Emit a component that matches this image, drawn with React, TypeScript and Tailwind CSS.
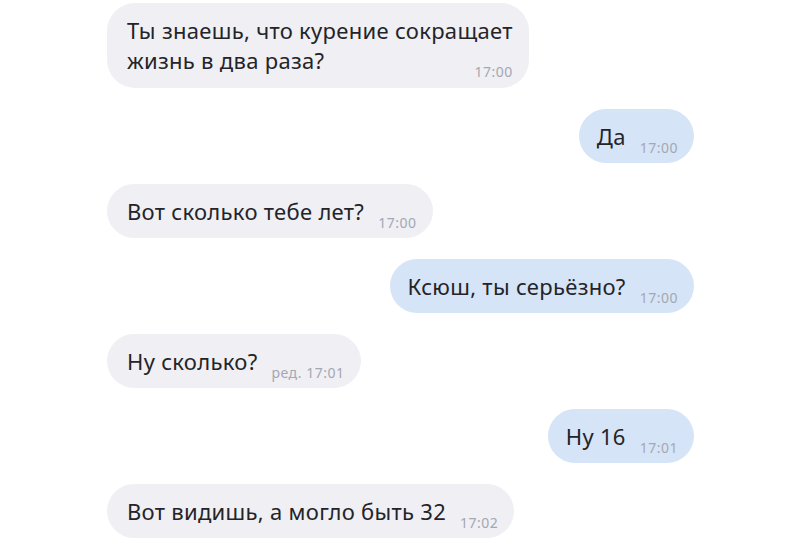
import React from 'react';

type Msg = {
  side: 'in' | 'out';
  lines: string[];
  time: string;
};

const messages: Msg[] = [
  { side: 'in', lines: ['Ты знаешь, что курение сокращает', 'жизнь в два раза?'], time: '17:00' },
  { side: 'out', lines: ['Да'], time: '17:00' },
  { side: 'in', lines: ['Вот сколько тебе лет?'], time: '17:00' },
  { side: 'out', lines: ['Ксюш, ты серьёзно?'], time: '17:00' },
  { side: 'in', lines: ['Ну сколько?'], time: 'ред. 17:01' },
  { side: 'out', lines: ['Ну 16'], time: '17:01' },
  { side: 'in', lines: ['Вот видишь, а могло быть 32'], time: '17:02' },
];

function Bubble({ msg, first }: { msg: Msg; first: boolean }) {
  const last = msg.lines[msg.lines.length - 1];
  const head = msg.lines.slice(0, -1);
  return (
    <div
      className={
        (msg.side === 'in'
          ? 'self-start bg-[#efeff4] pl-5 pr-4 '
          : 'self-end bg-[#d6e4f8] pl-[18px] pr-4 ') +
        (first ? 'rounded-[28px] pt-3 pb-[13px]' : 'rounded-[27px] py-3')
      }
    >
      {head.map((l) => (
        <div key={l} className="text-[22px] leading-[30px] tracking-[0.3px] text-[#242428] whitespace-nowrap">
          {l}
        </div>
      ))}
      <div className="flex items-baseline justify-between gap-[14px] text-[22px] leading-[30px] tracking-[0.3px] text-[#242428] whitespace-nowrap">
        <span>{last}</span>
        <span className="translate-y-[8px] text-[14px] leading-none tracking-[0.5px] text-[#a4a8b2]">
          {msg.time}
        </span>
      </div>
    </div>
  );
}

export default function App() {
  return (
    <div
      className="w-[800px] h-[546px] overflow-hidden bg-white pt-[3px] pl-[107px] pr-[106px] flex flex-col gap-[21px]"
      style={{ fontFamily: '"Noto Sans", "Open Sans", sans-serif' }}
    >
      {messages.map((m, i) => (
        <Bubble key={i} msg={m} first={i === 0} />
      ))}
    </div>
  );
}
